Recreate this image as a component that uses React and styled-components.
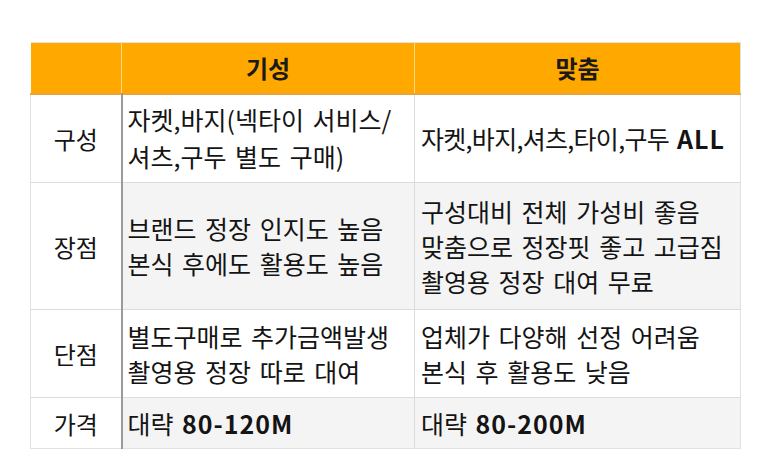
import React from "react";
import styled, { createGlobalStyle } from "styled-components";

const GlobalStyle = createGlobalStyle`
  html, body {
    margin: 0;
    padding: 0;
    background: #ffffff;
  }
  body {
    font-family: "Noto Sans CJK KR", "Noto Sans", sans-serif;
    color: #141414;
  }
`;

const Page = styled.div`
  width: 773px;
  height: 471px;
  padding: 42px 0 0 30px;
  box-sizing: border-box;
`;

const Table = styled.table`
  width: 710px;
  table-layout: fixed;
  border-collapse: collapse;
  border: 1px solid #e2e2e2;
`;

const HeadRow = styled.tr`
  height: 51px;
  background: #ffa800;
  border-bottom: 2px solid #e9a23c;
`;

const HeadCell = styled.th`
  padding: 0;
  font-size: 24px;
  line-height: 30px;
  font-weight: 700;
  color: #1a1a1a;
  text-align: center;
  border-left: 1px solid ${(p) => (p.$first ? "transparent" : "#ffd88a")};
`;

const Row = styled.tr`
  height: ${(p) => p.$h}px;
  border-top: 1px solid #dcdcdc;
`;

const Label = styled.td`
  padding: 0;
  font-size: 24px;
  line-height: 35px;
  text-align: center;
  vertical-align: middle;
  background: #ffffff;
  border-right: 2px solid #9a9a9a;
`;

const Cell = styled.td`
  padding: ${(p) => (p.$wide ? "0 6px" : "0 5px")};
  vertical-align: middle;
  background: ${(p) => (p.$shade ? "#f4f4f4" : "#ffffff")};
  border-left: 1px solid #dcdcdc;
`;

const Lines = styled.div`
  display: flex;
  flex-direction: column;
  gap: ${(p) => p.$gap || 0}px;
`;

const Line = styled.div`
  font-size: 25px;
  line-height: 35px;
  word-spacing: 3px;
  letter-spacing: ${(p) => (p.$tight ? "-0.7px" : "0")};
  white-space: nowrap;
`;

const Latin = styled.span`
  font-weight: 600;
  letter-spacing: 1px;
`;

const rows = [
  {
    label: "구성",
    h: 89,
    shade: false,
    a: { lines: ["자켓,바지(넥타이 서비스/", "셔츠,구두 별도 구매)"], gap: 2 },
    b: { lines: [<>자켓,바지,셔츠,타이,구두 <Latin>ALL</Latin></>], tight: true },
  },
  {
    label: "장점",
    h: 127,
    shade: true,
    a: { lines: ["브랜드 정장 인지도 높음", "본식 후에도 활용도 높음"] },
    b: { lines: ["구성대비 전체 가성비 좋음", "맞춤으로 정장핏 좋고 고급짐", "촬영용 정장 대여 무료"] },
  },
  {
    label: "단점",
    h: 88,
    shade: false,
    a: { lines: ["별도구매로 추가금액발생", "촬영용 정장 따로 대여"] },
    b: { lines: ["업체가 다양해 선정 어려움", "본식 후 활용도 낮음"] },
  },
  {
    label: "가격",
    h: 51,
    shade: true,
    a: { lines: [<>대략 <Latin>80-120M</Latin></>] },
    b: { lines: [<>대략 <Latin>80-200M</Latin></>] },
  },
];

function CellLines({ data }) {
  return (
    <Lines $gap={data.gap}>
      {data.lines.map((l, i) => (
        <Line key={i} $tight={data.tight}>
          {l}
        </Line>
      ))}
    </Lines>
  );
}

export default function App() {
  return (
    <Page>
      <GlobalStyle />
      <Table>
        <colgroup>
          <col style={{ width: 91 }} />
          <col style={{ width: 293 }} />
          <col style={{ width: 326 }} />
        </colgroup>
        <thead>
          <HeadRow>
            <HeadCell $first />
            <HeadCell>기성</HeadCell>
            <HeadCell>맞춤</HeadCell>
          </HeadRow>
        </thead>
        <tbody>
          {rows.map((r) => (
            <Row key={r.label} $h={r.h}>
              <Label>{r.label}</Label>
              <Cell $shade={r.shade}>
                <CellLines data={r.a} />
              </Cell>
              <Cell $shade={r.shade} $wide>
                <CellLines data={r.b} />
              </Cell>
            </Row>
          ))}
        </tbody>
      </Table>
    </Page>
  );
}
